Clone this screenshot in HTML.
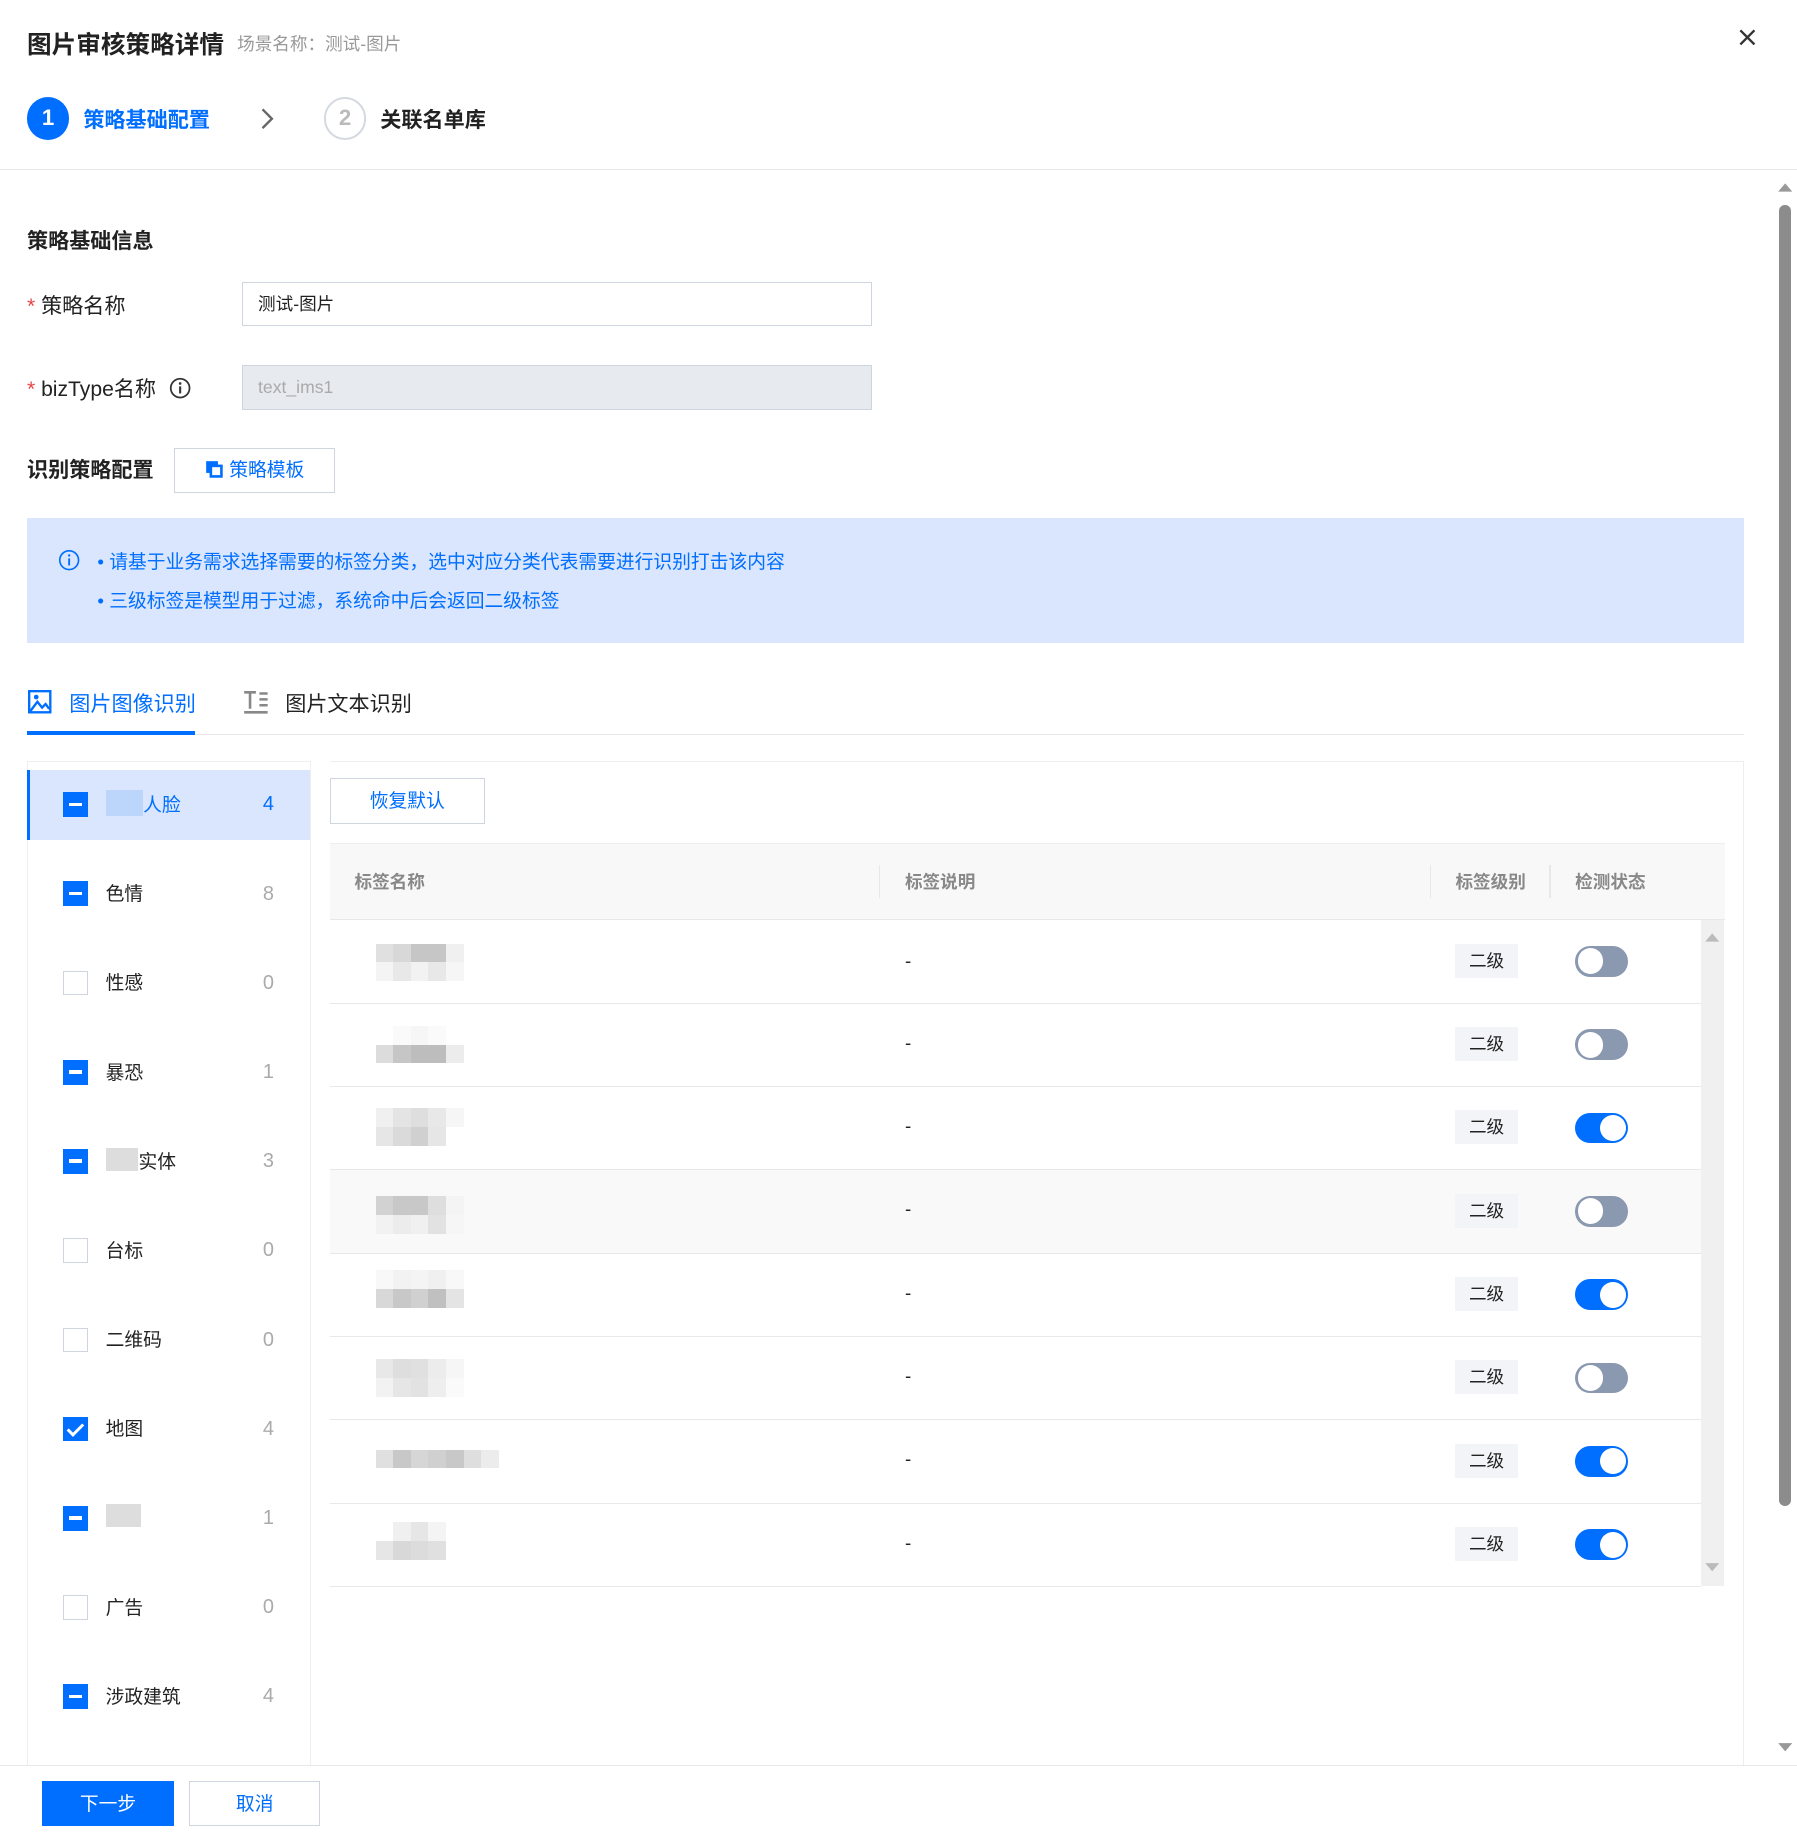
<!DOCTYPE html>
<html><head><meta charset="utf-8"><style>
*{box-sizing:border-box;margin:0;padding:0}
html,body{width:1797px;height:1841px;overflow:hidden;background:#fff}
#w{width:1531px;height:1568px;zoom:1.17374;position:relative;font-family:"Liberation Sans","Noto Sans CJK SC",sans-serif;color:#222;font-size:16px}
.a{position:absolute;white-space:nowrap}
.b{font-weight:bold}
.blue{color:#006eff}
.inp{position:absolute;border:1px solid #cfd5de;height:38px;padding-left:13px;line-height:36px;font-size:15px}
.cb{position:absolute;left:54px;width:21px;height:21px;border:1px solid #cfd5de;background:#fff}
.cb.m{background:#006eff;border-color:#006eff}
.cb.m:after{content:"";position:absolute;left:4px;top:8px;width:11px;height:3px;background:#fff}
.cb.c{background:#006eff;border-color:#006eff}
.cb.c:after{content:"";position:absolute;left:6px;top:2px;width:5px;height:11px;border:solid #fff;border-width:0 3px 3px 0;transform:rotate(45deg)}
.lt{position:absolute;left:90px;font-size:16px;margin-top:-2px}
.cnt{position:absolute;left:224px;font-size:17px;color:#aaa;margin-top:1px}
.cnt.blue{color:#006eff}
.row{position:absolute;left:281px;width:1168px;height:71px;border-bottom:1px solid #e8e8e8}
.tag{position:absolute;left:1240px;width:53px;height:29px;background:#f3f4f7;text-align:center;line-height:29px;font-size:15px}
.sw{position:absolute;left:1342px;width:45px;height:26px;border-radius:13px;background:#8a99b0}
.sw:after{content:"";position:absolute;left:2px;top:2px;width:22px;height:22px;border-radius:50%;background:#fff}
.sw.on{background:#006eff}
.sw.on:after{left:21px}
.px{position:absolute;left:320px;height:32px;width:80px}
.px i{display:block;width:15px;height:16px;float:left}
</style></head><body><div id="w">
<div class="a b" style="left:23px;top:21px;font-size:21px">图片审核策略详情</div>
<div class="a" style="left:202px;top:26px;font-size:15px;color:#999">场景名称：测试-图片</div>
<svg class="a" style="left:1481px;top:24px" width="16" height="16"><path d="M2 2L14 14M14 2L2 14" stroke="#333" stroke-width="2"/></svg>
<div class="a" style="left:23px;top:83px;width:36px;height:36px;border-radius:50%;background:#006eff;color:#fff;text-align:center;line-height:36px;font-size:19px;font-weight:bold">1</div>
<div class="a b blue" style="left:71px;top:89px;font-size:18px">策略基础配置</div>
<svg class="a" style="left:221px;top:91px" width="14" height="20"><path d="M3 2L11 10L3 18" stroke="#666" stroke-width="2" fill="none"/></svg>
<div class="a" style="left:276px;top:83px;width:36px;height:36px;border-radius:50%;border:2px solid #d5d9e0;color:#bbb;text-align:center;line-height:32px;font-size:19px;font-weight:bold">2</div>
<div class="a b" style="left:324px;top:89px;font-size:18px">关联名单库</div>
<div class="a" style="left:0;top:144px;width:1531px;height:1px;background:#e8e8e8"></div>
<svg class="a" style="left:1514px;top:154px" width="14" height="10"><path d="M1 9L7 2L13 9Z" fill="#999"/></svg>
<div class="a" style="left:1516px;top:175px;width:10px;height:1108px;background:#8c8c8c;border-radius:5px"></div>
<svg class="a" style="left:1514px;top:1484px" width="14" height="10"><path d="M1 1L7 8L13 1Z" fill="#999"/></svg>

<div class="a b" style="left:23px;top:192px;font-size:18px">策略基础信息</div>
<div class="a" style="left:23px;top:247px;font-size:18px"><span style="color:#e54545">*</span> 策略名称</div>
<div class="inp" style="left:206px;top:240px;width:537px">测试-图片</div>
<div class="a" style="left:23px;top:318px;font-size:18px"><span style="color:#e54545">*</span> bizType名称</div>
<svg class="a" style="left:144px;top:321px" width="19" height="19"><circle cx="9.5" cy="9.5" r="8" stroke="#333" stroke-width="1.5" fill="none"/><path d="M9.5 8v6" stroke="#333" stroke-width="1.8"/><circle cx="9.5" cy="5.5" r="1.1" fill="#333"/></svg>
<div class="inp" style="left:206px;top:311px;width:537px;background:#e7eaef;color:#aaa">text_ims1</div>
<div class="a b" style="left:23px;top:387px;font-size:18px">识别策略配置</div>
<div class="a" style="left:148px;top:382px;width:137px;height:38px;border:1px solid #cfd5de;font-size:16px;line-height:36px;padding-left:26px"><svg style="vertical-align:-2px" width="16" height="16"><rect x="1" y="1" width="10" height="10" fill="#006eff"/><rect x="5" y="5" width="9" height="9" fill="#fff" stroke="#006eff" stroke-width="2.2"/></svg> <span class="blue">策略模板</span></div>
<div class="a" style="left:23px;top:441px;width:1463px;height:107px;background:#d9e6fd"></div>
<svg class="a" style="left:49px;top:468px" width="19" height="19"><circle cx="9.5" cy="9.5" r="8" stroke="#006eff" stroke-width="1.4" fill="none"/><path d="M9.5 8v6" stroke="#006eff" stroke-width="1.6"/><circle cx="9.5" cy="5.5" r="1" fill="#006eff"/></svg>
<div class="a blue" style="left:83px;top:466px;font-size:16px">• 请基于业务需求选择需要的标签分类，选中对应分类代表需要进行识别打击该内容</div>
<div class="a blue" style="left:83px;top:499px;font-size:16px">• 三级标签是模型用于过滤，系统命中后会返回二级标签</div>

<svg class="a" style="left:24px;top:588px" width="20" height="20"><rect x="1" y="1" width="18" height="18" fill="none" stroke="#006eff" stroke-width="2"/><path d="M2 18L8 10L12 15L15 12L18 16" stroke="#006eff" stroke-width="2" fill="none"/><circle cx="7" cy="6" r="2" fill="#006eff"/></svg>
<div class="a blue" style="left:59px;top:586px;font-size:18px">图片图像识别</div>
<svg class="a" style="left:207px;top:588px" width="22" height="20"><path d="M1 2h10M6 2v14M14 3h7M14 8h7M14 13h7M1 19h20" stroke="#888" stroke-width="2.2"/></svg>
<div class="a" style="left:243px;top:586px;font-size:18px">图片文本识别</div>
<div class="a" style="left:23px;top:625px;width:1463px;height:1px;background:#e8e8e8"></div>
<div class="a" style="left:23px;top:623px;width:143px;height:3px;background:#006eff"></div>

<div class="a" style="left:23px;top:648px;width:242px;height:860px;border:1px solid #eee;border-bottom:none"></div>
<div class="a" style="left:23px;top:656px;width:241px;height:60px;background:#d9e6fd;border-left:3px solid #006eff"></div>
<div class="a" style="left:281px;top:648px;width:1205px;height:860px;border-top:1px solid #eee;border-right:1px solid #eee"></div>

<div class="cb m" style="top:675px"></div><div class="lt" style="top:675px"><span style="display:inline-block;width:32px;height:22px;background:#bcd6fb;vertical-align:-4px"></span><span class="blue">人脸</span></div><div class="cnt blue" style="top:675px">4</div>
<div class="cb m" style="top:751px"></div><div class="lt" style="top:751px">色情</div><div class="cnt" style="top:751px">8</div>
<div class="cb" style="top:827px"></div><div class="lt" style="top:827px">性感</div><div class="cnt" style="top:827px">0</div>
<div class="cb m" style="top:903px"></div><div class="lt" style="top:903px">暴恐</div><div class="cnt" style="top:903px">1</div>
<div class="cb m" style="top:979px"></div><div class="lt" style="top:979px"><span style="display:inline-block;width:28px;height:20px;background:#ddd;vertical-align:-3px"></span>实体</div><div class="cnt" style="top:979px">3</div>
<div class="cb" style="top:1055px"></div><div class="lt" style="top:1055px">台标</div><div class="cnt" style="top:1055px">0</div>
<div class="cb" style="top:1131px"></div><div class="lt" style="top:1131px">二维码</div><div class="cnt" style="top:1131px">0</div>
<div class="cb c" style="top:1207px"></div><div class="lt" style="top:1207px">地图</div><div class="cnt" style="top:1207px">4</div>
<div class="cb m" style="top:1283px"></div><div class="lt" style="top:1283px"><span style="display:inline-block;width:30px;height:20px;background:#ddd"></span></div><div class="cnt" style="top:1283px">1</div>
<div class="cb" style="top:1359px"></div><div class="lt" style="top:1359px">广告</div><div class="cnt" style="top:1359px">0</div>
<div class="cb m" style="top:1435px"></div><div class="lt" style="top:1435px">涉政建筑</div><div class="cnt" style="top:1435px">4</div>

<div class="a blue" style="left:281px;top:663px;width:132px;height:39px;border:1px solid #cfd5de;text-align:center;line-height:37px;font-size:16px">恢复默认</div>
<div class="a" style="left:281px;top:718px;width:1189px;height:66px;background:#f8f8f8;border-top:1px solid #eee;border-bottom:1px solid #e8e8e8"></div>
<div class="a b" style="left:302px;top:740px;font-size:15px;color:#888">标签名称</div>
<div class="a b" style="left:771px;top:740px;font-size:15px;color:#888">标签说明</div>
<div class="a b" style="left:1240px;top:740px;font-size:15px;color:#888">标签级别</div>
<div class="a b" style="left:1342px;top:740px;font-size:15px;color:#888">检测状态</div>
<div class="a" style="left:749px;top:737px;width:1px;height:28px;background:#e8e8e8"></div>
<div class="a" style="left:1218px;top:737px;width:1px;height:28px;background:#e8e8e8"></div>
<div class="a" style="left:1320px;top:737px;width:1px;height:28px;background:#e8e8e8"></div>
<div class="a" style="left:1449px;top:784px;width:20px;height:567px;background:#f0f0f0"></div>
<svg class="a" style="left:1452px;top:793px" width="14" height="10"><path d="M1 9L7 2L13 9Z" fill="#bbb"/></svg>
<svg class="a" style="left:1452px;top:1331px" width="14" height="10"><path d="M1 1L7 8L13 1Z" fill="#bbb"/></svg>

<div class="row" style="top:784px"></div><div class="row" style="top:855px"></div><div class="row" style="top:926px"></div><div class="row" style="top:997px;background:#f9f9f9"></div><div class="row" style="top:1068px"></div><div class="row" style="top:1139px"></div><div class="row" style="top:1210px"></div><div class="row" style="top:1281px"></div>

<div class="px" style="top:804px"><i style="background:#e0e0e0"></i><i style="background:#d8d8d8"></i><i style="background:#c6c6c6"></i><i style="background:#c6c6c6"></i><i style="background:#f0f0f0"></i><i style="background:#f4f4f4"></i><i style="background:#e8e8e8"></i><i style="background:#f2f2f2"></i><i style="background:#e8e8e8"></i><i style="background:#f6f6f6"></i></div>
<div class="px" style="top:874px"><i style="background:#fff"></i><i style="background:#fafafa"></i><i style="background:#f6f6f6"></i><i style="background:#fafafa"></i><i style="background:#fff"></i><i style="background:#dcdcdc"></i><i style="background:#c6c6c6"></i><i style="background:#bdbdbd"></i><i style="background:#bdbdbd"></i><i style="background:#ececec"></i></div>
<div class="px" style="top:944px"><i style="background:#f0f0f0"></i><i style="background:#e4e4e4"></i><i style="background:#dedede"></i><i style="background:#e8e8e8"></i><i style="background:#f6f6f6"></i><i style="background:#e6e6e6"></i><i style="background:#dadada"></i><i style="background:#d0d0d0"></i><i style="background:#e6e6e6"></i><i style="background:#fff"></i></div>
<div class="px" style="top:1019px"><i style="background:#d2d2d2"></i><i style="background:#c8c8c8"></i><i style="background:#c8c8c8"></i><i style="background:#dedede"></i><i style="background:#f4f4f4"></i><i style="background:#f2f2f2"></i><i style="background:#ececec"></i><i style="background:#f0f0f0"></i><i style="background:#e2e2e2"></i><i style="background:#f6f6f6"></i></div>
<div class="px" style="top:1082px"><i style="background:#f8f8f8"></i><i style="background:#f2f2f2"></i><i style="background:#f4f4f4"></i><i style="background:#f0f0f0"></i><i style="background:#f8f8f8"></i><i style="background:#d8d8d8"></i><i style="background:#c8c8c8"></i><i style="background:#d0d0d0"></i><i style="background:#c0c0c0"></i><i style="background:#e4e4e4"></i></div>
<div class="px" style="top:1158px"><i style="background:#e8e8e8"></i><i style="background:#dedede"></i><i style="background:#e0e0e0"></i><i style="background:#ececec"></i><i style="background:#f6f6f6"></i><i style="background:#f2f2f2"></i><i style="background:#e6e6e6"></i><i style="background:#e2e2e2"></i><i style="background:#eeeeee"></i><i style="background:#fafafa"></i></div>
<div class="px" style="top:1235px;width:110px;height:16px"><i style="background:#e0e0e0"></i><i style="background:#c8c8c8"></i><i style="background:#d6d6d6"></i><i style="background:#d0d0d0"></i><i style="background:#c8c8c8"></i><i style="background:#dedede"></i><i style="background:#ececec"></i></div>
<div class="px" style="top:1297px;width:64px"><i style="background:#fff"></i><i style="background:#f0f0f0"></i><i style="background:#e6e6e6"></i><i style="background:#f4f4f4"></i><i style="background:#e6e6e6"></i><i style="background:#d8d8d8"></i><i style="background:#dcdcdc"></i><i style="background:#e0e0e0"></i></div>

<div class="a" style="left:771px;top:809px">-</div><div class="tag" style="top:804px">二级</div><div class="sw" style="top:806px"></div>
<div class="a" style="left:771px;top:879px">-</div><div class="tag" style="top:875px">二级</div><div class="sw" style="top:877px"></div>
<div class="a" style="left:771px;top:950px">-</div><div class="tag" style="top:946px">二级</div><div class="sw on" style="top:948px"></div>
<div class="a" style="left:771px;top:1021px">-</div><div class="tag" style="top:1017px">二级</div><div class="sw" style="top:1019px"></div>
<div class="a" style="left:771px;top:1092px">-</div><div class="tag" style="top:1088px">二级</div><div class="sw on" style="top:1090px"></div>
<div class="a" style="left:771px;top:1163px">-</div><div class="tag" style="top:1159px">二级</div><div class="sw" style="top:1161px"></div>
<div class="a" style="left:771px;top:1234px">-</div><div class="tag" style="top:1230px">二级</div><div class="sw on" style="top:1232px"></div>
<div class="a" style="left:771px;top:1305px">-</div><div class="tag" style="top:1301px">二级</div><div class="sw on" style="top:1303px"></div>

<div class="a" style="left:0;top:1504px;width:1531px;height:64px;background:#fff;border-top:1px solid #e8e8e8"></div>
<div class="a" style="left:36px;top:1517px;width:112px;height:39px;background:#006eff;color:#fff;text-align:center;line-height:39px;font-size:16px">下一步</div>
<div class="a blue" style="left:161px;top:1517px;width:112px;height:39px;border:1px solid #cfd5de;text-align:center;line-height:37px;font-size:16px">取消</div>
</div></body></html>
